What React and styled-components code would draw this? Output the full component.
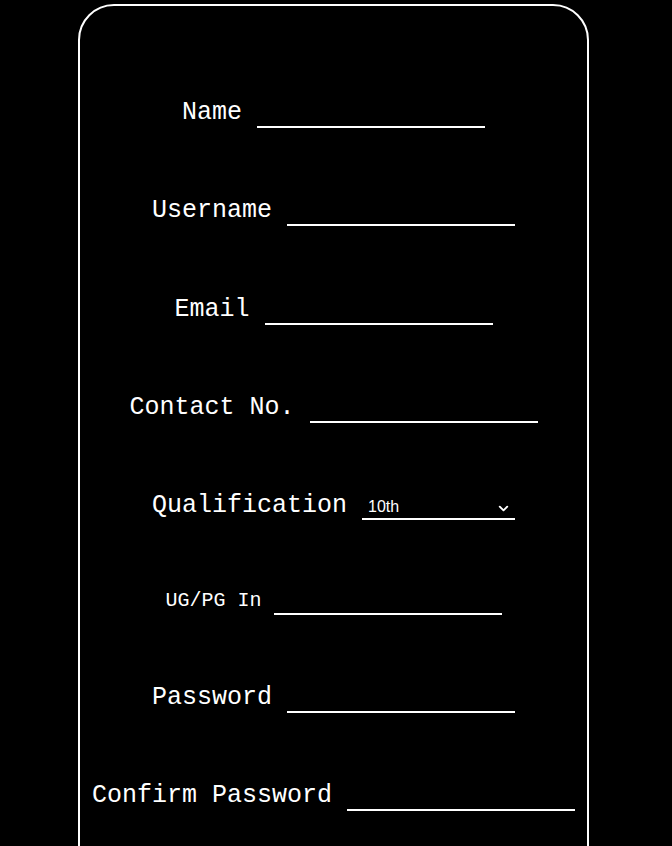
import styled, { createGlobalStyle } from 'styled-components'
import { ChevronDown } from 'lucide-react'

const GlobalStyle = createGlobalStyle`
  html, body {
    margin: 0;
    padding: 0;
    background: #000;
  }
`

const Page = styled.div`
  background: #000;
  min-height: 846px;
  padding-top: 4px;
  overflow: hidden;
`

const Card = styled.form`
  width: 511px;
  box-sizing: border-box;
  margin-left: 78px;
  border: 2px solid #fff;
  border-radius: 36px;
  padding: 92px 0 60px;
  color: #fff;
  font-family: "Liberation Mono", "Courier New", monospace;
`

const Row = styled.div`
  text-align: center;
  font-size: ${props => props.small ? '20px' : '25px'};
  line-height: 30px;
  margin-bottom: ${props => props.gap ?? 68.33}px;
  white-space: nowrap;
`

const Label = styled.label`
  color: #fff;
`

const Field = styled.input`
  box-sizing: border-box;
  width: 228px;
  background: transparent;
  border: none;
  border-bottom: 2px solid #fff;
  color: #fff;
  font-family: "Liberation Sans", Arial, sans-serif;
  font-size: 13.33px;
  padding: 1px 2px 4px;
  outline: none;
`

const SelectWrap = styled.span`
  position: relative;
  display: inline-block;
`

const Select = styled.select`
  box-sizing: border-box;
  width: 153px;
  appearance: none;
  background: #000;
  border: none;
  border-bottom: 2px solid #fff;
  border-radius: 0;
  color: #fff;
  font-family: "Liberation Sans", Arial, sans-serif;
  font-size: 16px;
  line-height: 18px;
  padding: 0 24px 2px 6px;
  outline: none;
`

const Arrow = styled(ChevronDown)`
  position: absolute;
  right: 4px;
  bottom: 5px;
  pointer-events: none;
  color: #fff;
`

const fields = [
  { label: 'Name', type: 'text' },
  { label: 'Username', type: 'text' },
  { label: 'Email', type: 'email' },
  { label: 'Contact No.', type: 'tel' },
]

const lower = [
  { label: 'UG/PG In', type: 'text', small: true, gap: 67 },
  { label: 'Password', type: 'password', gap: 67.5 },
  { label: 'Confirm Password', type: 'password' },
]

export default function App() {
  return (
    <Page>
      <GlobalStyle />
      <Card onSubmit={e => e.preventDefault()}>
        {fields.map(f => (
          <Row key={f.label}>
            <Label>{f.label}</Label> <Field type={f.type} />
          </Row>
        ))}
        <Row gap={65}>
          <Label>Qualification</Label>{' '}
          <SelectWrap>
            <Select defaultValue="10th">
              <option>10th</option>
              <option>12th</option>
              <option>Diploma</option>
              <option>UG</option>
              <option>PG</option>
            </Select>
            <Arrow size={15} strokeWidth={3} />
          </SelectWrap>
        </Row>
        {lower.map(f => (
          <Row key={f.label} small={f.small} gap={f.gap}>
            <Label>{f.label}</Label> <Field type={f.type} />
          </Row>
        ))}
      </Card>
    </Page>
  )
}
